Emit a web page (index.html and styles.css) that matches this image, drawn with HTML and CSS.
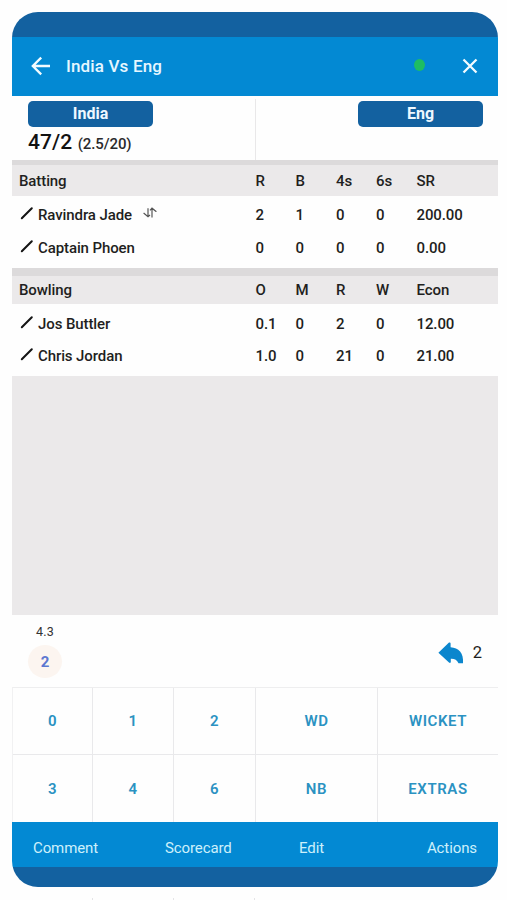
FILE: index.html
```html
<!DOCTYPE html>
<html lang="en">
<head>
    <meta charset="UTF-8">
    <meta name="viewport" content="width=device-width, initial-scale=1.0">
    <title>India Vs Eng</title>
    <link rel="stylesheet" href="styles.css">
</head>
<body>

    <div class="phone">
        <div class="status-bar"></div>

        <!-- Header -->
        <header class="header">
            <svg class="icon-back" viewBox="0 0 20 20"><path d="M19 10H2M10.2 1.6L1.8 10L10.2 18.4"/></svg>
            <h1 class="title">India Vs Eng</h1>
            <span class="live-dot"></span>
            <svg class="icon-close" viewBox="0 0 16 16"><path d="M1.5 1.5L14.5 14.5M14.5 1.5L1.5 14.5"/></svg>
        </header>

        <!-- Score -->
        <section class="score">
            <div class="team">
                <div class="team-name">India</div>
                <div class="runs">47/2 <span class="overs">(2.5/20)</span></div>
            </div>
            <div class="team team-right">
                <div class="team-name">Eng</div>
            </div>
        </section>

        <!-- Batting -->
        <section class="stats batting">
            <div class="row row-head">
                <span>Batting</span><span>R</span><span>B</span><span>4s</span><span>6s</span><span>SR</span>
            </div>
            <div class="row">
                <span class="player">
                    <svg class="icon-bat" viewBox="0 0 14 14"><path d="M1.8 12.2L11.8 2.2"/></svg>
                    Ravindra Jade
                    <svg class="icon-swap" viewBox="0 0 14 12"><path d="M5 1.2V9.8M.6 6L5 9.8L7 8M9 10.5V1.2M7 3.4L9 1.2L13.4 4.8"/></svg>
                </span>
                <span>2</span><span>1</span><span>0</span><span>0</span><span>200.00</span>
            </div>
            <div class="row">
                <span class="player">
                    <svg class="icon-bat" viewBox="0 0 14 14"><path d="M1.8 12.2L11.8 2.2"/></svg>
                    Captain Phoen
                </span>
                <span>0</span><span>0</span><span>0</span><span>0</span><span>0.00</span>
            </div>
        </section>

        <!-- Bowling -->
        <section class="stats bowling">
            <div class="row row-head">
                <span>Bowling</span><span>O</span><span>M</span><span>R</span><span>W</span><span>Econ</span>
            </div>
            <div class="row">
                <span class="player">
                    <svg class="icon-bat" viewBox="0 0 14 14"><path d="M1.8 12.2L11.8 2.2"/></svg>
                    Jos Buttler
                </span>
                <span>0.1</span><span>0</span><span>2</span><span>0</span><span>12.00</span>
            </div>
            <div class="row">
                <span class="player">
                    <svg class="icon-bat" viewBox="0 0 14 14"><path d="M1.8 12.2L11.8 2.2"/></svg>
                    Chris Jordan
                </span>
                <span>1.0</span><span>0</span><span>21</span><span>0</span><span>21.00</span>
            </div>
        </section>

        <div class="spacer"></div>

        <!-- Last balls -->
        <section class="balls">
            <div class="ball">
                <span class="ball-over">4.3</span>
                <span class="ball-run">2</span>
            </div>
            <div class="undo">
                <svg class="icon-undo" viewBox="0 0 26 22"><path d="M0.4 10.8L11 0.6Q12.6 0 12.6 1.6V5.2C20.5 5.6 26 11 25 21.3H20.5C19 18 16.5 16.6 12.8 16.8V20Q12.4 21.6 11 20.6Z"/></svg>
                <span>2</span>
            </div>
        </section>

        <!-- Keypad -->
        <section class="keypad">
            <button class="key">0</button>
            <button class="key">1</button>
            <button class="key">2</button>
            <button class="key">WD</button>
            <button class="key">WICKET</button>
            <button class="key">3</button>
            <button class="key">4</button>
            <button class="key">6</button>
            <button class="key">NB</button>
            <button class="key">EXTRAS</button>
        </section>

        <nav class="menu">
            <a>Comment</a>
            <a>Scorecard</a>
            <a>Edit</a>
            <a>Actions</a>
        </nav>
        <div class="bottom-bar"></div>
    </div>

    <div class="ticks"><i></i><i></i><i></i></div>

</body>
</html>
```

FILE: styles.css
```css
* {
    box-sizing: border-box;
}

body {
    margin: 0;
    height: 900px;
    overflow: hidden;
    background-color: #fefefe;
    font-family: Roboto, "Liberation Sans", sans-serif;
    color: #1f1f21;
}

.phone {
    width: 486px;
    height: 875px;
    margin: 12px 0 0 12px;
    border-radius: 26px;
    overflow: hidden;
    display: flex;
    flex-direction: column;
    background-color: #fefefe;
}

.status-bar {
    height: 25px;
    background-color: #1361a0;
}

/* Header */
.header {
    height: 59px;
    padding: 0 20px 2px 19px;
    display: flex;
    align-items: center;
    background-color: #0389d3;
    color: #e6f7ff;
}

.header svg {
    fill: none;
    stroke: #f2fbff;
    stroke-width: 2.3;
}

.icon-back {
    width: 20px;
    height: 20px;
}

.title {
    margin: 0 auto 0 15px;
    font-size: 17px;
    font-weight: 500;
    letter-spacing: 0.15px;
}

.live-dot {
    width: 11px;
    height: 12px;
    margin: -1px 37px 0 0;
    border-radius: 50%;
    background-color: #1ebd62;
}

.icon-close {
    width: 16px;
    height: 16px;
    margin-top: 1px;
}

/* Score */
.score {
    height: 64px;
    display: flex;
}

.team {
    width: 243px;
    padding: 5px 16px 0;
}

.team-right {
    margin-top: 3px;
    padding: 2px 15px 0;
    border-left: 1px solid #e9e8e9;
    display: flex;
    justify-content: flex-end;
}

.team-name {
    width: 125px;
    height: 26px;
    border-radius: 5px;
    background-color: #1361a0;
    color: #eef8ff;
    font-size: 16px;
    font-weight: 700;
    line-height: 26px;
    text-align: center;
}

.runs {
    margin-top: 2px;
    font-size: 21px;
    font-weight: 500;
    line-height: 26px;
    color: #111;
    letter-spacing: 0.1px;
}

.overs {
    font-size: 15px;
    letter-spacing: -0.1px;
    color: #2a2a2c;
}

/* Batting and bowling tables */
.stats {
    font-size: 15px;
    font-weight: 500;
    letter-spacing: -0.1px;
}

.batting {
    height: 108px;
    border-top: 5px solid #dcdadb;
}

.bowling {
    height: 108px;
    border-top: 8px solid #dcdadb;
}

.row {
    height: 33px;
    padding-left: 7px;
    display: grid;
    grid-template-columns: 236.5px 40px 40.5px 40px 40.5px 1fr;
    align-items: center;
}

.row-head {
    height: 31px;
    background-color: #ebe9ea;
}

.row-head + .row {
    margin-top: 2px;
}

.bowling .row-head {
    height: 28px;
}

.bowling .row-head + .row {
    height: 31px;
    margin-top: 4px;
}

.player {
    display: flex;
    align-items: center;
}

.icon-bat {
    width: 14px;
    height: 14px;
    margin: -4px 4px 0 1px;
    fill: none;
    stroke: #151515;
    stroke-width: 2;
    stroke-linecap: round;
}

.icon-swap {
    width: 14px;
    height: 12px;
    margin: -4px 0 0 11px;
    fill: none;
    stroke: #555;
    stroke-width: 1.2;
}

.spacer {
    flex: 1;
    background-color: #ebe9ea;
}

/* Last balls */
.balls {
    height: 72px;
    padding: 9px 16px 0;
    display: flex;
    justify-content: space-between;
}

.ball {
    width: 34px;
    display: flex;
    flex-direction: column;
    align-items: center;
}

.ball-over {
    font-size: 12.5px;
    line-height: 16px;
    letter-spacing: 0.3px;
    color: #333;
}

.ball-run {
    width: 34px;
    height: 33px;
    margin-top: 5px;
    border-radius: 50%;
    background-color: #fcf5f0;
    color: #5d77d0;
    font-size: 15px;
    font-weight: 700;
    line-height: 34px;
    text-align: center;
}

.undo {
    height: 56px;
    display: flex;
    align-items: center;
    gap: 9px;
    font-size: 16.5px;
}

.icon-undo {
    width: 26px;
    height: 22px;
    margin-top: 2px;
    fill: #0b86cd;
}

/* Keypad */
.keypad {
    height: 135px;
    display: grid;
    grid-template-columns: 80px 81px 82px 122px 1fr;
    grid-template-rows: 67px 67px;
    border-top: 1px solid #eeeeef;
    border-left: 1px solid #f1f1f2;
}

.key {
    padding: 0;
    border: solid #e9e9eb;
    border-width: 0 1px 1px 0;
    background: none;
    color: #2b92c2;
    font-family: inherit;
    font-size: 15px;
    font-weight: 600;
    letter-spacing: 0.6px;
}

.key:nth-child(5n) {
    border-right: none;
}

.key:nth-child(n+6) {
    border-bottom: none;
}

/* Bottom menu */
.menu {
    height: 45px;
    padding: 7px 21px 0;
    display: grid;
    grid-template-columns: 132px 134px 1fr auto;
    align-items: center;
    background-color: #0389d3;
    color: #cdf0fb;
    font-size: 15px;
    letter-spacing: -0.1px;
}

.bottom-bar {
    height: 20px;
    background-color: #1361a0;
}

.ticks {
    margin: 11px 0 0 92px;
    display: flex;
    gap: 80px;
}

.ticks i {
    width: 1px;
    height: 2px;
    background-color: #e4e4e6;
}
```
